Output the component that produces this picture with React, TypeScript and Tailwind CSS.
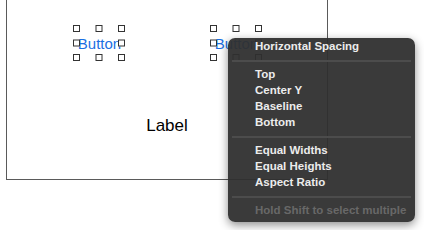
import React from "react";

// Selection handles around a canvas item
const Handles = () => {
  const spots = [
    "left-0 top-0",
    "left-1/2 -translate-x-1/2 top-0",
    "right-0 top-0",
    "left-0 top-1/2 -translate-y-1/2",
    "right-0 top-1/2 -translate-y-1/2",
    "left-0 bottom-0",
    "left-1/2 -translate-x-1/2 bottom-0",
    "right-0 bottom-0",
  ];
  return (
    <>
      {spots.map((s, i) => (
        <span
          key={i}
          className={`absolute ${s} w-[7px] h-[7px] border border-[#333] bg-white`}
        />
      ))}
    </>
  );
};

const CanvasButton = () => (
  <div className="relative w-[52px] h-[36px] flex items-center justify-center pl-[1px] text-[15px] leading-none text-[#1b6fe3]">
    Button
    <Handles />
  </div>
);

const menuGroups = [
  ["Horizontal Spacing"],
  ["Top", "Center Y", "Baseline", "Bottom"],
  ["Equal Widths", "Equal Heights", "Aspect Ratio"],
];

const Separator = () => (
  <div className="h-[12px] flex items-center px-[4px]">
    <div className="h-[2px] w-full bg-[#4c4c4c]" />
  </div>
);

const Menu = () => (
  <div className="absolute left-[228px] top-[38px] w-[187px] h-[184px] rounded-[7px] bg-[#2f2f2f]/95 shadow-[0_3px_10px_rgba(0,0,0,0.45)] pt-[1px] font-['Liberation_Sans',sans-serif] text-[11.5px]">
    {menuGroups.map((group, gi) => (
      <div key={gi}>
        {gi > 0 && <Separator />}
        {group.map((item) => (
          <div
            key={item}
            className="h-[16px] flex items-center pl-[27px] font-bold text-[#ececec]"
          >
            {item}
          </div>
        ))}
      </div>
    ))}
    <Separator />
    <div className="h-[16px] flex items-center pl-[27px] font-bold text-[#686868]">
      Hold Shift to select multiple
    </div>
  </div>
);

export default function App() {
  return (
    <div className="relative w-[424px] h-[230px] bg-white overflow-hidden font-['Liberation_Sans',sans-serif]">
      {/* canvas view */}
      <div className="ml-[6px] w-[322px] h-[180px] border-l border-r border-b border-[#5a5a5a] pt-[25px] flex flex-col">
        <div className="flex gap-[85px] pl-[66px]">
          <CanvasButton />
          <CanvasButton />
        </div>
        <div className="mt-[55px] text-center text-[17px] leading-[20px] text-black">
          Label
        </div>
      </div>
      <Menu />
    </div>
  );
}
